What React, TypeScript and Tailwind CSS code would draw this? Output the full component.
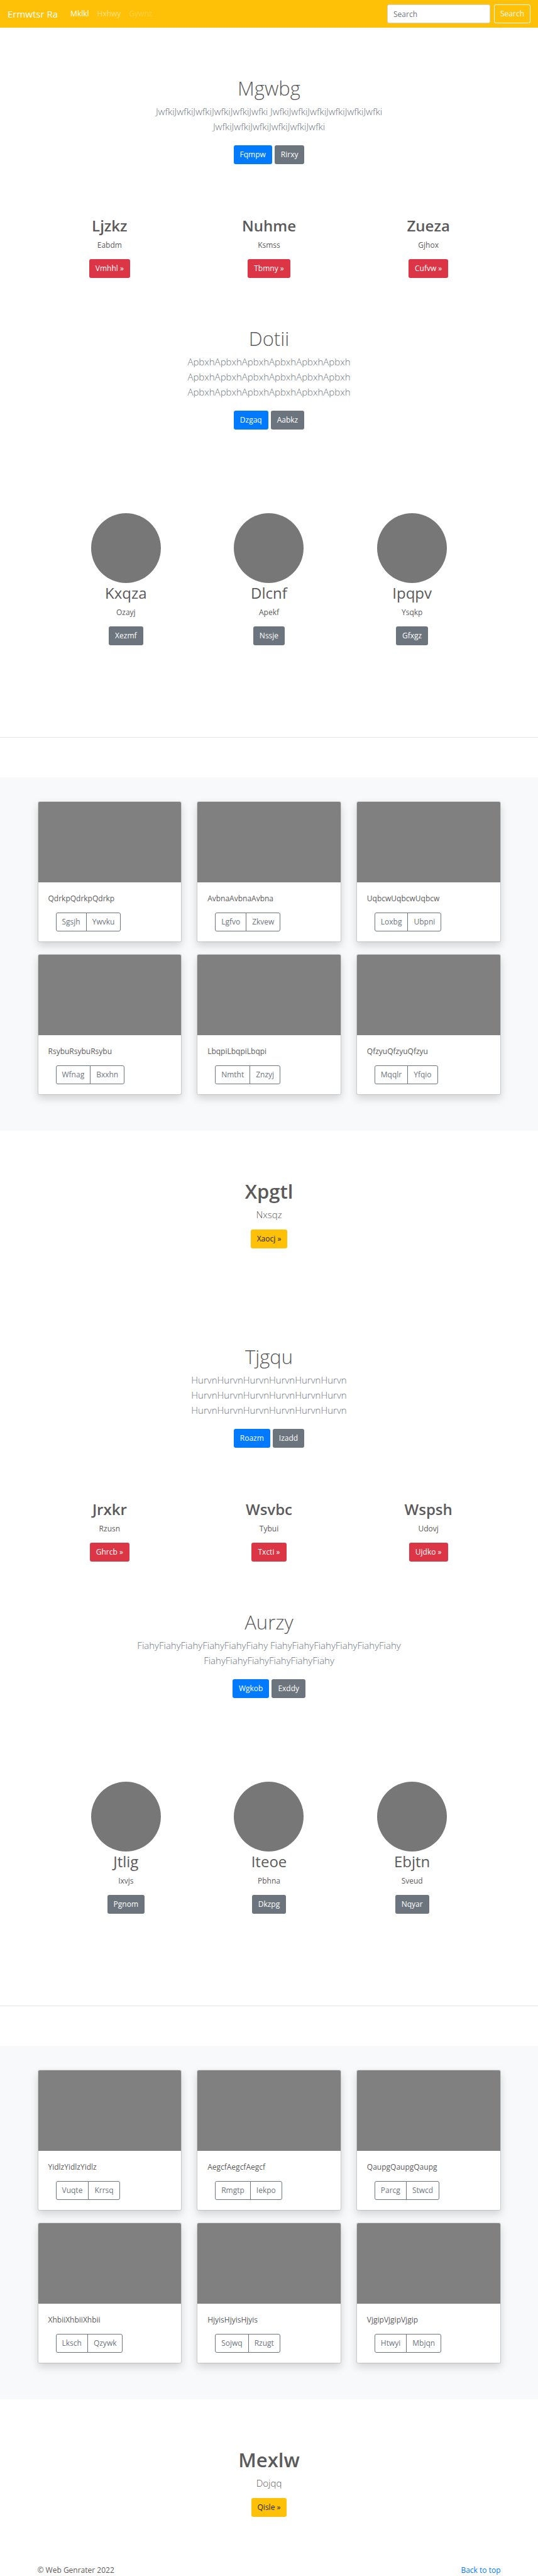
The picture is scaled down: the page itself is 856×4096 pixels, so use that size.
import type { ReactNode } from "react";

type Tone = "blue" | "gray" | "red" | "yellow";

const tones: Record<Tone, string> = {
  blue: "bg-[#007bff] text-white",
  gray: "bg-[#6c757d] text-white",
  red: "bg-[#dc3545] text-white",
  yellow: "bg-[#ffc107] text-[#212529]",
};

function Button({ tone, children }: { tone: Tone; children: ReactNode }) {
  return (
    <button type="button" className={`h-[30px] rounded-[3px] px-[10px] text-[12px] leading-[18px] ${tones[tone]}`}>
      {children}
    </button>
  );
}

function NavBar() {
  return (
    <header className="flex h-11 items-center bg-[#ffc107] px-3 text-white">
      <a href="#" className="mr-5 text-[15px]">Ermwtsr Ra</a>
      <nav className="flex flex-1 gap-[13px] text-[12px]">
        <a href="#">Mklkl</a>
        <a href="#" className="text-white/50">Hxhwy</a>
        <a href="#" className="text-white/25">Gywnz</a>
      </nav>
      <form className="flex gap-[6px]">
        <input
          type="search"
          aria-label="Search"
          placeholder="Search"
          className="h-[30px] w-[164px] rounded-[3px] border border-[#ced4da] bg-white px-[9px] text-[12px] text-[#495057] placeholder:text-[#6c757d]"
        />
        <button type="button" className="h-[30px] rounded-[3px] border border-[#f8f9fa] px-[9px] text-[12px] text-[#f8f9fa]">
          Search
        </button>
      </form>
    </header>
  );
}

function Intro({ title, word, actions }: { title: string; word: string; actions: [string, string] }) {
  const run = word.repeat(6);
  return (
    <section className="mx-auto max-w-[475px] text-center">
      <h1 className="mb-[5px] text-[31px] font-light leading-[40px]">{title}</h1>
      <p className="mb-[18px] text-[15px] font-light leading-[24px] text-[#6c757d]">
        {run} {run} {run}
      </p>
      <div className="flex justify-center gap-1">
        <Button tone="blue">{actions[0]}</Button>
        <Button tone="gray">{actions[1]}</Button>
      </div>
    </section>
  );
}

type Item = { title: string; text: string; action: string };

function ItemBody({ item, tone, heading }: { item: Item; tone: Tone; heading: string }) {
  return (
    <>
      <h2 className={`mb-[5px] text-[24px] leading-[32px] ${heading}`}>{item.title}</h2>
      <p className="mb-[13px] text-[12px] leading-[19px]">{item.text}</p>
      <Button tone={tone}>{item.action}</Button>
    </>
  );
}

function Columns({ items }: { items: Item[] }) {
  return (
    <section className="mx-auto mt-[82px] mb-[76px] grid max-w-[737px] grid-cols-3 gap-6">
      {items.map((item) => (
        <div key={item.title} className="flex flex-col items-center">
          <ItemBody item={{ ...item, action: `${item.action} »` }} tone="red" heading="font-semibold" />
        </div>
      ))}
    </section>
  );
}

function Circles({ items }: { items: Item[] }) {
  return (
    <section className="mx-auto mt-[133px] mb-[146px] grid max-w-[683px] grid-cols-3">
      {items.map((item) => (
        <div key={item.title} className="flex flex-col items-center">
          <div className="size-[111px] rounded-full bg-[#777777]" />
          <ItemBody item={item} tone="gray" heading="font-normal" />
        </div>
      ))}
    </section>
  );
}

type CardData = [word: string, first: string, second: string];

function Album({ cards }: { cards: CardData[] }) {
  return (
    <section className="bg-[#f8f9fa] pt-[38px] pb-[57px]">
      <div className="mx-auto grid max-w-[737px] grid-cols-3 gap-x-6 gap-y-[19px]">
        {cards.map(([word, first, second]) => (
          <article
            key={word}
            className="overflow-hidden rounded-[3px] border border-black/12 bg-white bg-clip-padding shadow-[0_6px_13px_rgba(0,0,0,0.15)]"
          >
            <div className="h-32 bg-[#808080]" />
            <div className="p-4">
              <p className="mb-[13px] text-[12px] leading-[19px]">{word.repeat(3)}</p>
              <div className="ml-3 flex text-[12px] text-[#6c757d]">
                <button type="button" className="h-[30px] rounded-l-[3px] border border-[#6c757d] px-[9px]">{first}</button>
                <button type="button" className="-ml-px h-[30px] rounded-r-[3px] border border-[#6c757d] px-[9px]">{second}</button>
              </div>
            </div>
          </article>
        ))}
      </div>
    </section>
  );
}

function Closing({ item }: { item: Item }) {
  return (
    <section className="mt-[76px] text-center">
      <h1 className="mb-[5px] text-[31px] font-semibold leading-[40px]">{item.title}</h1>
      <p className="mb-3 text-[15px] font-light leading-[24px]">{item.text}</p>
      <div className="flex justify-center">
        <Button tone="yellow">{item.action} »</Button>
      </div>
    </section>
  );
}

function Divider() {
  return <hr className="mb-[63px] border-t border-[#e5e5e5]" />;
}

export default function App() {
  return (
    <div className="bg-white font-['Open_Sans','Noto_Sans',sans-serif] text-[#5a5a5a]">
      <NavBar />
      <main>
        <div className="pt-[76px]">
          <Intro title="Mgwbg" word="Jwfki" actions={["Fqmpw", "Rirxy"]} />
          <Columns
            items={[
              { title: "Ljzkz", text: "Eabdm", action: "Vmhhl" },
              { title: "Nuhme", text: "Ksmss", action: "Tbmny" },
              { title: "Zueza", text: "Gjhox", action: "Cufvw" },
            ]}
          />
          <Intro title="Dotii" word="Apbxh" actions={["Dzgaq", "Aabkz"]} />
          <Circles
            items={[
              { title: "Kxqza", text: "Ozayj", action: "Xezmf" },
              { title: "Dlcnf", text: "Apekf", action: "Nssje" },
              { title: "Ipqpv", text: "Ysqkp", action: "Gfxgz" },
            ]}
          />
          <Divider />
          <Album
            cards={[
              ["Qdrkp", "Sgsjh", "Ywvku"],
              ["Avbna", "Lgfvo", "Zkvew"],
              ["Uqbcw", "Loxbg", "Ubpni"],
              ["Rsybu", "Wfnag", "Bxxhn"],
              ["Lbqpi", "Nmtht", "Znzyj"],
              ["Qfzyu", "Mqqlr", "Yfqio"],
            ]}
          />
          <Closing item={{ title: "Xpgtl", text: "Nxsqz", action: "Xaocj" }} />
        </div>
        <div className="pt-[152px]">
          <Intro title="Tjgqu" word="Hurvn" actions={["Roazm", "Izadd"]} />
          <Columns
            items={[
              { title: "Jrxkr", text: "Rzusn", action: "Ghrcb" },
              { title: "Wsvbc", text: "Tybui", action: "Txcti" },
              { title: "Wspsh", text: "Udovj", action: "Ujdko" },
            ]}
          />
          <Intro title="Aurzy" word="Fiahy" actions={["Wgkob", "Exddy"]} />
          <Circles
            items={[
              { title: "Jtlig", text: "Ixvjs", action: "Pgnom" },
              { title: "Iteoe", text: "Pbhna", action: "Dkzpg" },
              { title: "Ebjtn", text: "Sveud", action: "Nqyar" },
            ]}
          />
          <Divider />
          <Album
            cards={[
              ["Yidlz", "Vuqte", "Krrsq"],
              ["Aegcf", "Rmgtp", "Iekpo"],
              ["Qaupg", "Parcg", "Stwcd"],
              ["Xhbii", "Lksch", "Qzywk"],
              ["Hjyis", "Sojwq", "Rzugt"],
              ["Vjgip", "Htwyi", "Mbjqn"],
            ]}
          />
          <Closing item={{ title: "Mexlw", text: "Dojqq", action: "Qisle" }} />
        </div>
      </main>
      <footer className="mx-auto mt-[75px] flex max-w-[737px] justify-between text-[12px] leading-[19px]">
        <p>© Web Genrater 2022</p>
        <a href="#" className="text-[#007bff]">Back to top</a>
      </footer>
    </div>
  );
}
